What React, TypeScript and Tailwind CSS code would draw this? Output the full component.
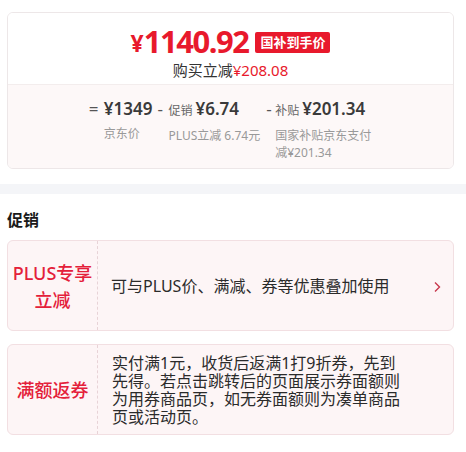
import React from "react";

const FONT = "font-['Noto_Sans','Noto_Sans_CJK_SC',sans-serif]";

export default function App() {
  return (
    <div className={`w-[466px] h-[452px] bg-white overflow-hidden ${FONT}`}>
      <div className="pt-[12px] pl-[7px]">
        <div className="w-[447px] rounded-[6px] border border-[#ede7e8] overflow-hidden">
          <div className="h-[71px] bg-white flex flex-col items-center pt-[9px]">
            <div className="flex items-center h-[37px]">
              <span className="text-[#e8192c] font-bold text-[23px] leading-[26px] mt-[5px]">¥</span>
              <span className="text-[#e8192c] font-bold text-[31px] leading-[36px] tracking-[-1.5px]">1140.92</span>
              <span className="ml-[7px] mt-[3px] bg-[#e8192c] text-white font-bold text-[13px] leading-[21px] h-[21px] px-[5px] rounded-[2px]">
                国补到手价
              </span>
            </div>
            <div className="text-[15px] leading-[18px] text-[#333] mt-[2px]">
              购买立减<span className="text-[#e8192c]">¥208.08</span>
            </div>
          </div>
          <div className="h-[84px] bg-[#fdf8f8] border-t border-[#f3eded] flex justify-center pt-[13px] pl-[1px]">
            <div className="flex">
              <span className="text-[17px] leading-[22px] text-[#555] w-[15px]">=</span>
              <div className="flex flex-col">
                <span className="text-[17px] leading-[22px] font-semibold text-[#3a3a3a]">¥1349</span>
                <span className="text-[12px] leading-[18px] text-[#999] mt-[5px]">京东价</span>
              </div>
            </div>
            <div className="flex ml-[5px]">
              <span className="text-[17px] leading-[22px] text-[#555] w-[11px]">-</span>
              <div className="flex flex-col">
                <div className="flex items-baseline">
                  <span className="text-[12px] leading-[22px] text-[#666] mr-[3px]">促销</span>
                  <span className="text-[17px] leading-[22px] font-semibold text-[#3a3a3a]">¥6.74</span>
                </div>
                <span className="text-[12px] leading-[18px] text-[#999] mt-[5px]">PLUS立减 6.74元</span>
              </div>
            </div>
            <div className="flex ml-[6px]">
              <span className="text-[17px] leading-[22px] text-[#555] w-[9px]">-</span>
              <div className="flex flex-col">
                <div className="flex items-baseline">
                  <span className="text-[12px] leading-[22px] text-[#666] mr-[3px]">补贴</span>
                  <span className="text-[17px] leading-[22px] font-semibold text-[#3a3a3a]">¥201.34</span>
                </div>
                <span className="text-[12px] leading-[17px] text-[#999] mt-[5px] w-[98px]">国家补贴京东支付减¥201.34</span>
              </div>
            </div>
          </div>
        </div>
      </div>
      <div className="h-[15px]" />
      <div className="h-[10px] bg-[#f4f5f8]" />
      <div className="pl-[7px] pt-[15px]">
        <div className="text-[16px] leading-[22px] font-bold text-[#1a1a1a]">促销</div>
        <div className="mt-[9px] w-[447px] h-[91px] rounded-[6px] border border-[#f2dfe2] bg-[#fdf5f6] flex">
          <div className="w-[90px] border-r border-dashed border-[#e8d3d7] flex items-center justify-center">
            <div className="text-center text-[18px] leading-[27px] font-medium text-[#e4203a] mt-[2px]">
              PLUS专享
              <br />
              立减
            </div>
          </div>
          <div className="flex-1 flex items-center pl-[13px] pr-[12px]">
            <span className="flex-1 text-[16px] leading-[18px] text-[#2b2b2b]">可与PLUS价、满减、券等优惠叠加使用</span>
            <svg width="7" height="12" viewBox="0 0 7 12" className="mt-[2px]">
              <path d="M1 1.5 L5.5 6 L1 10.5" fill="none" stroke="#c8384d" strokeWidth="1.4" />
            </svg>
          </div>
        </div>
        <div className="mt-[13px] w-[447px] h-[91px] rounded-[6px] border border-[#f2dfe2] bg-[#fdf5f6] flex">
          <div className="w-[90px] border-r border-dashed border-[#e8d3d7] flex items-center justify-center">
            <div className="text-center text-[18px] leading-[27px] font-medium text-[#e4203a] mt-[2px]">满额返券</div>
          </div>
          <div className="flex-1 flex items-center pl-[14px]">
            <span className="w-[290px] text-[16px] leading-[18px] text-[#2b2b2b]">
              实付满1元，收货后返满1打9折券，先到先得。若点击跳转后的页面展示券面额则为用券商品页，如无券面额则为凑单商品页或活动页。
            </span>
          </div>
        </div>
      </div>
    </div>
  );
}
